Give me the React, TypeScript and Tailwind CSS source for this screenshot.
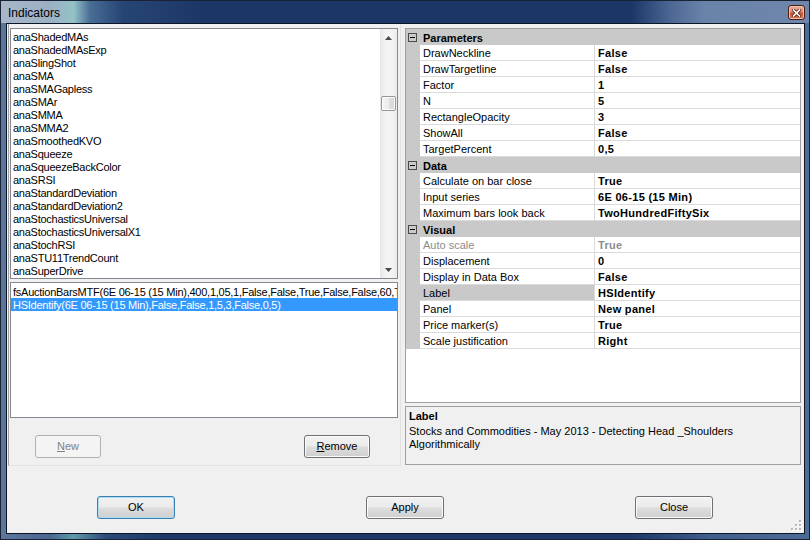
import React from "react";

const indicators = [
  "anaShadedMAs",
  "anaShadedMAsExp",
  "anaSlingShot",
  "anaSMA",
  "anaSMAGapless",
  "anaSMAr",
  "anaSMMA",
  "anaSMMA2",
  "anaSmoothedKVO",
  "anaSqueeze",
  "anaSqueezeBackColor",
  "anaSRSI",
  "anaStandardDeviation",
  "anaStandardDeviation2",
  "anaStochasticsUniversal",
  "anaStochasticsUniversalX1",
  "anaStochRSI",
  "anaSTU11TrendCount",
  "anaSuperDrive",
];

type PRow =
  | { cat: string }
  | { name: string; value: string; disabled?: boolean; selected?: boolean };

const rows: PRow[] = [
  { cat: "Parameters" },
  { name: "DrawNeckline", value: "False" },
  { name: "DrawTargetline", value: "False" },
  { name: "Factor", value: "1" },
  { name: "N", value: "5" },
  { name: "RectangleOpacity", value: "3" },
  { name: "ShowAll", value: "False" },
  { name: "TargetPercent", value: "0,5" },
  { cat: "Data" },
  { name: "Calculate on bar close", value: "True" },
  { name: "Input series", value: "6E 06-15 (15 Min)" },
  { name: "Maximum bars look back", value: "TwoHundredFiftySix" },
  { cat: "Visual" },
  { name: "Auto scale", value: "True", disabled: true },
  { name: "Displacement", value: "0" },
  { name: "Display in Data Box", value: "False" },
  { name: "Label", value: "HSIdentify", selected: true },
  { name: "Panel", value: "New panel" },
  { name: "Price marker(s)", value: "True" },
  { name: "Scale justification", value: "Right" },
];

const normalBtn =
  "h-[23px] rounded-[3px] border border-[#707070] bg-[linear-gradient(180deg,#f2f2f2_0%,#ebebeb_48%,#dddddd_52%,#cfcfcf_100%)] shadow-[inset_0_0_0_1px_#fbfbfb] flex items-center justify-center text-[11px] leading-none text-black shrink-0";
const defaultBtn =
  "h-[23px] rounded-[3px] border border-[#3c7fb1] bg-[linear-gradient(180deg,#f2f2f2_0%,#ebebeb_48%,#dddddd_52%,#cfcfcf_100%)] shadow-[inset_0_0_0_1px_#a9dcf4] flex items-center justify-center text-[11px] leading-none text-black shrink-0";
const disabledBtn =
  "h-[23px] rounded-[3px] border border-[#adb2b5] bg-[#f4f4f4] flex items-center justify-center text-[11px] leading-none text-[#838383] shrink-0";

function Scrollbar() {
  return (
    <div className="w-[17px] h-full relative shrink-0 bg-[linear-gradient(90deg,#e6e6e6_0%,#f4f4f4_35%,#f4f4f4_65%,#ebebeb_100%)]">
      <div className="h-[17px] flex items-center justify-center">
        <svg width="7" height="4" viewBox="0 0 7 4">
          <polygon points="0,4 3.5,0 7,4" fill="#4a4a4a" />
        </svg>
      </div>
      <div className="absolute top-[67px] left-[1px] w-[15px] h-[15px] rounded-[2px] border border-[#979797] bg-[linear-gradient(90deg,#f6f6f6_0%,#ececec_50%,#dedede_51%,#d8d8d8_100%)] shadow-[inset_0_0_0_1px_#fcfcfc]" />
      <div className="absolute bottom-0 left-0 w-[17px] h-[17px] flex items-center justify-center">
        <svg width="7" height="4" viewBox="0 0 7 4">
          <polygon points="0,0 7,0 3.5,4" fill="#4a4a4a" />
        </svg>
      </div>
    </div>
  );
}

function CatRow({ title }: { title: string }) {
  return (
    <div className="h-[16px] bg-[#c9c9c9] flex items-center">
      <div className="ml-[2px] w-[9px] h-[9px] border border-[#4a4a4a] flex items-center justify-center">
        <div className="w-[5px] h-px bg-black" />
      </div>
      <span className="ml-[6px] pt-[2px] font-bold text-[11px] leading-[13px]">{title}</span>
    </div>
  );
}

function ItemRow({
  name,
  value,
  disabled,
  selected,
}: {
  name: string;
  value: string;
  disabled?: boolean;
  selected?: boolean;
}) {
  return (
    <div className="h-[16px] flex">
      <div className="w-[14px] bg-[#c9c9c9] shrink-0" />
      <div
        className={
          "w-[175px] shrink-0 border-r border-b border-[#dadada] pl-[3px] pt-[2px] flex items-center whitespace-nowrap overflow-hidden " +
          (selected ? "bg-[#c9c9c9] " : "bg-white ") +
          (disabled ? "text-[#8c8c8c]" : "text-black")
        }
      >
        {name}
      </div>
      <div
        className={
          "flex-1 border-b border-[#dadada] bg-white pl-[3px] pt-[2px] flex items-center font-bold tracking-[0.3px] whitespace-nowrap overflow-hidden " +
          (disabled ? "text-[#8c8c8c]" : "text-black")
        }
      >
        {value}
      </div>
    </div>
  );
}

export default function App() {
  return (
    <div className="w-[810px] h-[540px] flex flex-col border border-[#1a2336] overflow-hidden font-['Liberation_Sans',Arial,sans-serif] text-[11px] text-black bg-[linear-gradient(90deg,#5d779c_0%,#4a6790_6%,#5f9aa6_9%,#2b4a7a_13%,#1d3868_20%,#1d3868_78%,#3f5f8c_88%,#4d6b96_100%)]">
      {/* Title bar */}
      <div className="h-[22px] shrink-0 flex items-start justify-between bg-[linear-gradient(90deg,#a8b7c9_0%,#9cb0c5_6%,#93c2c6_9%,#4a6e96_11%,#274574_15%,#1c3767_25%,#1c3767_78%,#4d6894_83%,#6a83a9_87%,#6e86ab_100%)]">
        <span className="ml-[7px] mt-[5px] text-[12px] leading-[14px] text-black">
          Indicators
        </span>
        <div className="mt-[4px] mr-[4px] w-[17px] h-[15px] rounded-[3px] border border-[#4a1f16] bg-[linear-gradient(180deg,#eab2a2_0%,#dc8a74_45%,#c8502f_55%,#d87a55_100%)] flex items-center justify-center shadow-[inset_0_0_0_1px_#f0c0b0]">
          <svg width="9" height="8" viewBox="0 0 9 8">
            <path d="M1.5,1 L7.5,7 M7.5,1 L1.5,7" stroke="#5a2418" strokeWidth="3.2" strokeLinecap="square" />
            <path d="M1.5,1 L7.5,7 M7.5,1 L1.5,7" stroke="#ffffff" strokeWidth="1.6" strokeLinecap="square" />
          </svg>
        </div>
      </div>

      {/* Client */}
      <div className="flex-1 ml-[5px] mr-[4px] mb-[5px] border border-[#0d1626] bg-[#f0f0f0] flex flex-col relative">
        {/* Top region */}
        <div className="h-[442px] shrink-0 flex">
          {/* Left panel */}
          <div className="ml-px w-[393px] shrink-0 border-l border-[#a0a0a0] border-b border-b-[#e2e2e2] border-r border-r-[#e2e2e2] pt-[4px] pl-px flex flex-col">
            {/* List 1 */}
            <div className="w-[388px] h-[251px] border border-[#828790] bg-white flex">
              <div className="flex-1 pl-[2px] pt-px overflow-hidden tracking-[-0.25px]">
                {indicators.map((s) => (
                  <div key={s} className="h-[13px] leading-[15px] whitespace-nowrap">
                    {s}
                  </div>
                ))}
              </div>
              <Scrollbar />
            </div>
            {/* List 2 */}
            <div className="mt-[3px] w-[388px] h-[136px] border border-[#828790] bg-white pt-[2px] overflow-hidden tracking-[-0.25px]">
              <div className="h-[13px] leading-[14px] pl-[2px] whitespace-nowrap overflow-hidden">
                fsAuctionBarsMTF(6E 06-15 (15 Min),400,1,05,1,False,False,True,False,False,60,True,False)
              </div>
              <div className="h-[13px] leading-[14px] pl-[2px] whitespace-nowrap overflow-hidden bg-[#3399ff] text-white">
                HSIdentify(6E 06-15 (15 Min),False,False,1,5,3,False,0,5)
              </div>
            </div>
            {/* Buttons */}
            <div className="mt-[17px] flex">
              <div className={disabledBtn + " ml-[25px] w-[66px]"}>
                <span>
                  <span className="underline">N</span>ew
                </span>
              </div>
              <div className={normalBtn + " ml-[203px] w-[66px]"}>
                <span>
                  <span className="underline">R</span>emove
                </span>
              </div>
            </div>
          </div>

          {/* Right panel */}
          <div className="flex-1 flex flex-col">
            <div className="ml-[4px] mt-[4px] w-[396px] h-[375px] border border-[#a0a0a0] bg-white flex flex-col">
              {rows.map((r, i) =>
                "cat" in r ? (
                  <CatRow key={i} title={r.cat} />
                ) : (
                  <ItemRow key={i} name={r.name} value={r.value} disabled={r.disabled} selected={r.selected} />
                )
              )}
            </div>
            <div className="ml-[4px] mt-[3px] w-[396px] h-[59px] border border-[#a0a0a0] bg-[#f0f0f0] pl-[3px] pt-[3px]">
              <div className="font-bold leading-[13px]">Label</div>
              <div className="mt-[2px] leading-[13px]">
                Stocks and Commodities - May 2013 - Detecting Head _Shoulders
                <br />
                Algorithmically
              </div>
            </div>
          </div>
        </div>

        {/* Bottom buttons */}
        <div className="flex-1 flex items-start pt-[30px]">
          <div className={defaultBtn + " ml-[90px] w-[78px]"}>OK</div>
          <div className={normalBtn + " ml-[191px] w-[78px]"}>Apply</div>
          <div className={normalBtn + " ml-[191px] w-[78px]"}>Close</div>
        </div>

        {/* Resize grip */}
        <svg className="absolute right-[2px] bottom-[2px]" width="11" height="11" viewBox="0 0 11 11">
          {[
            [8, 0],
            [8, 4],
            [4, 4],
            [8, 8],
            [4, 8],
            [0, 8],
          ].map(([x, y], i) => (
            <g key={i}>
              <rect x={x + 1} y={y + 1} width="2" height="2" fill="#ffffff" />
              <rect x={x} y={y} width="2" height="2" fill="#b8b8b8" />
            </g>
          ))}
        </svg>
      </div>
    </div>
  );
}
